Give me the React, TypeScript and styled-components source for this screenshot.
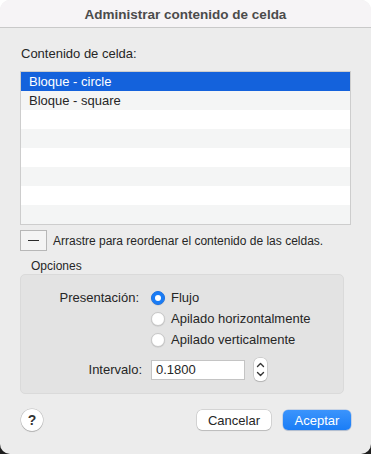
import { createGlobalStyle } from 'styled-components'
import styled from 'styled-components'

const GlobalStyle = createGlobalStyle`
  html, body {
    margin: 0;
    padding: 0;
    background: linear-gradient(to bottom, #ffffff 50%, #1e1e1e 50%);
  }
  body {
    font-family: "Liberation Sans", Arial, sans-serif;
    -webkit-font-smoothing: antialiased;
  }
`

const items = ['Bloque - circle', 'Bloque - square', '', '', '', '', '', '']

const layouts = [
  { label: 'Flujo', checked: true },
  { label: 'Apilado horizontalmente', checked: false },
  { label: 'Apilado verticalmente', checked: false },
]

export default function App() {
  return (
    <>
      <GlobalStyle />
      <Window>
        <TitleBar>Administrar contenido de celda</TitleBar>
        <Body>
          <SectionLabel>Contenido de celda:</SectionLabel>
          <List>
            {items.map((text, i) => (
              <Row key={i} $selected={i === 0} $odd={i % 2 === 1}>
                {text}
              </Row>
            ))}
          </List>

          <DragRow>
            <MinusButton type="button" aria-label="Quitar">
              <MinusBar />
            </MinusButton>
            <Hint>Arrastre para reordenar el contenido de las celdas.</Hint>
          </DragRow>

          <GroupTitle>Opciones</GroupTitle>
          <Group>
            <FormRow>
              <FieldLabel $width={79}>Presentación:</FieldLabel>
              <RadioList>
                {layouts.map((l) => (
                  <RadioRow key={l.label}>
                    <Radio $checked={l.checked} />
                    <span>{l.label}</span>
                  </RadioRow>
                ))}
              </RadioList>
            </FormRow>
            <IntervalRow>
              <FieldLabel $width={82}>Intervalo:</FieldLabel>
              <NumberField>0.1800</NumberField>
              <Stepper>
                <svg width="9" height="6" viewBox="0 0 9 6">
                  <path d="M1.5 4.5 L4.5 1.5 L7.5 4.5" fill="none" stroke="#333" strokeWidth="1.4" strokeLinecap="round" strokeLinejoin="round" />
                </svg>
                <svg width="9" height="6" viewBox="0 0 9 6">
                  <path d="M1.5 1.5 L4.5 4.5 L7.5 1.5" fill="none" stroke="#333" strokeWidth="1.4" strokeLinecap="round" strokeLinejoin="round" />
                </svg>
              </Stepper>
            </IntervalRow>
          </Group>

          <Footer>
            <HelpButton type="button">?</HelpButton>
            <Buttons>
              <PushButton type="button" $width={74}>Cancelar</PushButton>
              <PushButton type="button" $width={68} $primary>
                Aceptar
              </PushButton>
            </Buttons>
          </Footer>
        </Body>
      </Window>
    </>
  )
}

/* ─── Styles ─── */

const Window = styled.div`
  display: flex;
  flex-direction: column;
  width: 371px;
  height: 454px;
  border-radius: 10px;
  overflow: hidden;
  background: #ececec;
  color: #262626;
`

const TitleBar = styled.div`
  height: 28px;
  display: flex;
  align-items: center;
  justify-content: center;
  background: #f6f4f6;
  border-bottom: 1px solid #c9c9c9;
  font-size: 13.5px;
  font-weight: bold;
  color: #4b4b4b;
  box-sizing: border-box;
  padding-top: 1px;
`

const Body = styled.div`
  flex: 1;
  display: flex;
  flex-direction: column;
  padding: 18px 20px 0 20px;
`

const SectionLabel = styled.div`
  font-size: 13px;
  line-height: 16px;
  padding-left: 1px;
  margin-bottom: 9px;
`

const List = styled.div`
  display: flex;
  flex-direction: column;
  border: 1px solid #cdcdcd;
  background: #fff;
`

const Row = styled.div<{ $selected: boolean; $odd: boolean }>`
  height: 19px;
  line-height: 19px;
  padding-left: 8px;
  font-size: 13px;
  color: ${(p) => (p.$selected ? '#ffffff' : '#262626')};
  background: ${(p) => (p.$selected ? '#1462dc' : p.$odd ? '#f4f5f5' : '#ffffff')};
`

const DragRow = styled.div`
  display: flex;
  align-items: center;
  gap: 6px;
  margin-top: 5px;
`

const MinusButton = styled.button`
  width: 27px;
  height: 21px;
  padding: 0;
  display: flex;
  align-items: center;
  justify-content: center;
  border: 1px solid #b7b7b7;
  background: #f4f4f4;
  box-sizing: border-box;
`

const MinusBar = styled.span`
  width: 11px;
  height: 1.5px;
  background: #2a2a2a;
`

const Hint = styled.span`
  font-size: 12px;
  color: #262626;
`

const GroupTitle = styled.div`
  font-size: 12px;
  margin: 8px 0 0 11px;
  line-height: 14px;
`

const Group = styled.div`
  margin-top: 1px;
  width: 324px;
  height: 120px;
  box-sizing: border-box;
  background: #e3e3e3;
  border: 1px solid #dadada;
  border-radius: 5px;
  padding-top: 12px;
`

const FormRow = styled.div`
  display: flex;
  align-items: flex-start;
`

const FieldLabel = styled.span<{ $width: number }>`
  width: ${(p) => p.$width + 39}px;
  flex-shrink: 0;
  font-size: 13px;
  line-height: 21px;
  text-align: right;
`

const RadioList = styled.div`
  display: flex;
  flex-direction: column;
  margin-left: 12px;
`

const RadioRow = styled.div`
  display: flex;
  align-items: center;
  gap: 6px;
  height: 21px;
  font-size: 13px;
`

const Radio = styled.span<{ $checked: boolean }>`
  width: 14px;
  height: 14px;
  border-radius: 50%;
  box-sizing: border-box;
  position: relative;
  background: ${(p) => (p.$checked ? '#1a7cf5' : '#ffffff')};
  border: 1px solid ${(p) => (p.$checked ? '#1a72e6' : '#c8c8c8')};
  box-shadow: 0 0.5px 1px rgba(0, 0, 0, 0.15);

  &::after {
    content: '';
    display: ${(p) => (p.$checked ? 'block' : 'none')};
    position: absolute;
    left: 50%;
    top: 50%;
    width: 6px;
    height: 6px;
    margin: -3px 0 0 -3px;
    border-radius: 50%;
    background: #fff;
  }
`

const IntervalRow = styled.div`
  display: flex;
  align-items: center;
  margin-top: 8px;
`

const NumberField = styled.div`
  margin-left: 9px;
  width: 94px;
  height: 20px;
  box-sizing: border-box;
  background: #fff;
  border: 1px solid #c4c4c4;
  padding-left: 4px;
  font-size: 13px;
  line-height: 18px;
`

const Stepper = styled.div`
  margin-left: 9px;
  width: 13px;
  height: 23px;
  box-sizing: border-box;
  display: flex;
  flex-direction: column;
  align-items: center;
  justify-content: space-around;
  padding: 2px 0;
  background: #fff;
  border-radius: 5px;
  box-shadow: 0 0 0 0.5px rgba(0, 0, 0, 0.18), 0 1px 1px rgba(0, 0, 0, 0.12);
`

const Footer = styled.div`
  display: flex;
  align-items: center;
  justify-content: space-between;
  margin-top: 15px;
  padding-left: 1px;
`

const HelpButton = styled.button`
  width: 22px;
  height: 22px;
  padding: 0;
  border-radius: 50%;
  border: none;
  background: #fff;
  box-shadow: 0 0 0 0.5px rgba(0, 0, 0, 0.2), 0 1px 1px rgba(0, 0, 0, 0.15);
  font-family: "Liberation Sans", Arial, sans-serif;
  font-size: 14px;
  font-weight: bold;
  color: #333;
  line-height: 22px;
`

const Buttons = styled.div`
  display: flex;
  gap: 12px;
`

const PushButton = styled.button<{ $primary?: boolean; $width: number }>`
  height: 20px;
  padding: 0;
  width: ${(p) => p.$width}px;
  border: none;
  border-radius: 5px;
  font-family: "Liberation Sans", Arial, sans-serif;
  font-size: 13px;
  color: ${(p) => (p.$primary ? '#ffffff' : '#262626')};
  background: ${(p) => (p.$primary ? 'linear-gradient(#3b94fc, #1a7df6)' : '#ffffff')};
  box-shadow: ${(p) =>
    p.$primary
      ? '0 0 0 0.5px rgba(0, 80, 200, 0.3), 0 1px 1px rgba(0, 0, 0, 0.12)'
      : '0 0 0 0.5px rgba(0, 0, 0, 0.2), 0 1px 1px rgba(0, 0, 0, 0.12)'};
`
